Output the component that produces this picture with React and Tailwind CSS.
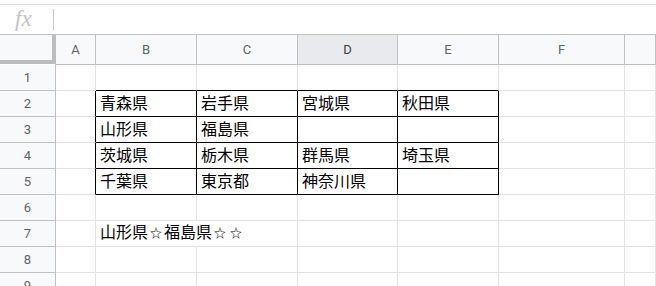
import React from 'react';

const cols = [
  { id: 'A', w: 'w-[40px]' },
  { id: 'B', w: 'w-[101px]' },
  { id: 'C', w: 'w-[101px]' },
  { id: 'D', w: 'w-[100px]' },
  { id: 'E', w: 'w-[101px]' },
  { id: 'F', w: 'w-[126px]' },
  { id: 'G', w: 'flex-1' },
];

const data = {
  2: { B: '青森県', C: '岩手県', D: '宮城県', E: '秋田県' },
  3: { B: '山形県', C: '福島県' },
  4: { B: '茨城県', C: '栃木県', D: '群馬県', E: '埼玉県' },
  5: { B: '千葉県', C: '東京都', D: '神奈川県' },
  7: { B: '山形県☆福島県☆☆' },
};

const boxed = ['B', 'C', 'D', 'E'];

function cellBorders(row, col) {
  const inBox = row >= 2 && row <= 5 && boxed.includes(col);
  let right = 'border-r-[#e2e2e3]';
  if (inBox || (col === 'A' && row >= 2 && row <= 5)) right = 'border-r-black';
  // text in B7 spills over into C7, so the gridline under it is hidden
  if (row === 7 && col === 'B') right = 'border-r-white';
  const bottom =
    inBox || (row === 1 && boxed.includes(col)) ? 'border-b-black' : 'border-b-[#e2e2e3]';
  return `${right} ${bottom}`;
}

// stars render a bit smaller than the kanji around them
function CellText({ text }) {
  return (
    <span className="shrink-0">
      {text.split('').map((ch, i) =>
        ch === '☆' ? (
          <span key={i} className="inline-block w-[16px] text-center text-[12px]">
            ☆
          </span>
        ) : (
          <span key={i}>{ch}</span>
        )
      )}
    </span>
  );
}

export default function App() {
  const rows = [1, 2, 3, 4, 5, 6, 7, 8, 9];
  return (
    <div className="w-[656px] h-[286px] overflow-hidden bg-white font-['Roboto','Liberation_Sans',sans-serif]">
      {/* formula bar */}
      <div className="mt-1 h-[31px] border-t border-b border-t-[#e0e0e0] border-b-[#c0c0c0] flex items-center">
        <span className="ml-[15px] w-[38px] font-['Liberation_Serif',serif] italic text-[23px] leading-none text-[#c4c4c4] -mt-[3px]">
          fx
        </span>
        <div className="w-px h-[21px] bg-[#c8c8c8]" />
      </div>

      {/* column headers */}
      <div className="flex h-[30px]">
        <div className="w-[56px] shrink-0 flex flex-col">
          <div className="flex-1 flex">
            <div className="flex-1 bg-[#f8f9fa]" />
            <div className="w-[4px] bg-[#bdbdbd]" />
          </div>
          <div className="h-[4px] bg-[#bdbdbd]" />
          <div className="h-[1px] bg-white border-r border-[#bdbdbd]" />
        </div>
        {cols.map((c) => (
          <div
            key={c.id}
            className={`${c.w} shrink-0 flex items-center justify-center border-r border-b border-[#c0c0c0] text-[13px] ${
              c.id === 'D' ? 'bg-[#e8eaed] text-[#3c4043]' : 'bg-[#f8f9fa] text-[#5f6368]'
            }`}
          >
            {c.id === 'G' ? '' : c.id}
          </div>
        ))}
      </div>

      {/* body rows */}
      {rows.map((r) => (
        <div key={r} className="flex h-[26px]">
          <div className="w-[56px] shrink-0 bg-[#f8f9fa] border-r border-b border-[#c0c0c0] flex items-center justify-center text-[13px] text-[#5f6368]">
            {r}
          </div>
          {cols.map((c) => (
            <div
              key={c.id}
              className={`${c.w} shrink-0 border-r border-b ${cellBorders(r, c.id)} flex items-center pl-[4px] whitespace-nowrap overflow-visible text-[16px] leading-[16px] text-black font-['Liberation_Sans','Noto_Sans_CJK_JP',sans-serif]`}
            >
              {data[r] && data[r][c.id] ? <CellText text={data[r][c.id]} /> : ''}
            </div>
          ))}
        </div>
      ))}
    </div>
  );
}
